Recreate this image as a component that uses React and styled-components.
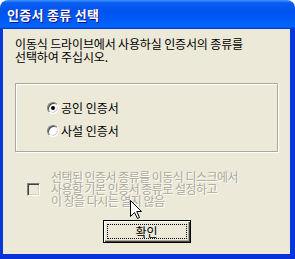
import React from "react";
import styled, { createGlobalStyle } from "styled-components";

const GlobalStyle = createGlobalStyle`
  html, body {
    margin: 0;
    padding: 0;
    background: #ffffff;
  }
`;

const Window = styled.div`
  position: relative;
  width: 295px;
  height: 259px;
  display: flex;
  flex-direction: column;
  font-family: "Noto Sans CJK KR", "DejaVu Sans", sans-serif;
  font-size: 12px;
  color: #000000;
`;

const TitleBar = styled.div`
  height: 29px;
  flex-shrink: 0;
  display: flex;
  align-items: center;
  padding-left: 7px;
  border-radius: 8px 8px 0 0;
  background: linear-gradient(
    180deg,
    #3d95ff 0%,
    #0a5cf0 10%,
    #0053ee 40%,
    #0060fa 85%,
    #0066ff 92%,
    #0058f0 95%,
    #003dd7 97%,
    #003dd7 100%
  );
  color: #ffffff;
  font-weight: bold;
  font-size: 13px;
  text-shadow: 1px 1px 0 #0f1089;
  letter-spacing: 0.3px;
`;

const Client = styled.div`
  flex: 1;
  display: flex;
  flex-direction: column;
  background: #ece9d8;
  border-left: 3px solid #0838d9;
  border-right: 5px solid #0838d9;
  border-bottom: 5px solid #0831d9;
`;

const Intro = styled.p`
  margin: 8px 0 0 12px;
  line-height: 13px;
  letter-spacing: -0.15px;
`;

const GroupBox = styled.div`
  box-sizing: border-box;
  margin: 20px 0 0 12px;
  width: 263px;
  height: 69px;
  border: 1px solid #aca899;
  box-shadow: inset 1px 1px 0 #ffffff, 1px 1px 0 #ffffff;
  padding: 17px 0 0 31px;
  display: flex;
  flex-direction: column;
  gap: 10px;
`;

const RadioRow = styled.label`
  display: flex;
  align-items: center;
  gap: 2px;
  height: 13px;
  line-height: 13px;
`;

const RadioCircle = styled.span`
  box-sizing: border-box;
  width: 12px;
  height: 12px;
  border-radius: 50%;
  border: 1px solid;
  border-color: #808080 #ffffff #ffffff #808080;
  box-shadow: inset 1px 1px 0 #404040, inset -1px -1px 0 #d4d0c8;
  background: #ffffff;
  display: flex;
  align-items: center;
  justify-content: center;
  &::after {
    content: "";
    width: 4px;
    height: 4px;
    border-radius: 50%;
    background: ${(p) => (p.checked ? "#000000" : "transparent")};
  }
`;

const CheckRow = styled.div`
  display: flex;
  align-items: center;
  gap: 11px;
  margin: 19px 0 0 24px;
`;

const CheckBox = styled.span`
  box-sizing: border-box;
  flex-shrink: 0;
  width: 13px;
  height: 13px;
  border: 1px solid;
  border-color: #808080 #ffffff #ffffff #808080;
  box-shadow: inset 1px 1px 0 #404040, inset -1px -1px 0 #d4d0c8;
  background: #ece9d8;
`;

const DisabledText = styled.div`
  line-height: 12px;
  color: #aca899;
  text-shadow: 1px 1px 0 #ffffff;
  letter-spacing: -0.55px;
`;

const Button = styled.button`
  align-self: center;
  box-sizing: border-box;
  margin-top: 13px;
  width: 88px;
  height: 23px;
  padding: 3px;
  border: 1px solid #000000;
  background: #ece9d8;
  box-shadow: inset 1px 1px 0 #ffffff, inset -1px -1px 0 #404040,
    inset -2px -2px 0 #aca899;
  font-family: inherit;
  font-size: 12px;
  color: #000000;
  display: flex;
`;

const FocusRing = styled.span`
  flex: 1;
  display: flex;
  align-items: center;
  justify-content: center;
  border: 1px dotted #000000;
  line-height: 13px;
`;

const Cursor = styled.svg`
  position: absolute;
  left: 130px;
  top: 200px;
  pointer-events: none;
`;

export default function App() {
  return (
    <>
      <GlobalStyle />
      <Window>
        <TitleBar>인증서 종류 선택</TitleBar>
        <Client>
          <Intro>
            이동식 드라이브에서 사용하실 인증서의 종류를
            <br />
            선택하여 주십시오.
          </Intro>
          <GroupBox>
            <RadioRow>
              <RadioCircle checked />
              <span>공인 인증서</span>
            </RadioRow>
            <RadioRow>
              <RadioCircle />
              <span>사설 인증서</span>
            </RadioRow>
          </GroupBox>
          <CheckRow>
            <CheckBox />
            <DisabledText>
              선택된 인증서 종류를 이동식 디스크에서
              <br />
              사용할 기본 인증서 종류로 설정하고
              <br />이 창을 다시는 열지 않음
            </DisabledText>
          </CheckRow>
          <Button>
            <FocusRing>확인</FocusRing>
          </Button>
        </Client>
        <Cursor width="13" height="20" viewBox="0 0 13 20">
          <path
            d="M0.5 0.5 L0.5 16.5 L4.5 12.5 L7.5 18.5 L9.5 17.5 L6.8 11.5 L11.5 11.5 Z"
            fill="#ffffff"
            stroke="#000000"
            strokeWidth="1"
          />
        </Cursor>
      </Window>
    </>
  );
}
